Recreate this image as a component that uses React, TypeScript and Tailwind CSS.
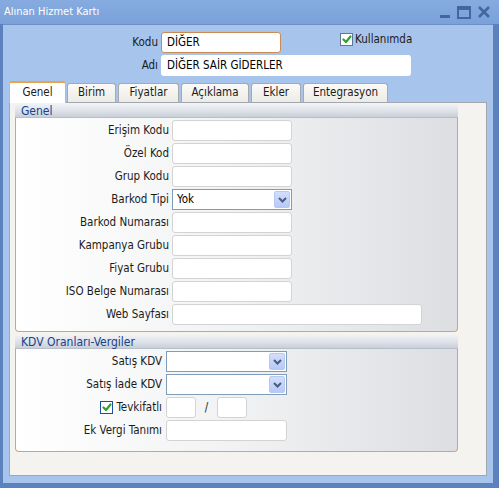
import React from "react"

const font = "font-['DejaVu_Sans_Condensed','DejaVu_Sans',sans-serif] font-stretch-condensed"

const Check = ({ border }: { border: string }) => (
    <div className={`w-[13px] h-[13px] bg-white border ${border} flex items-center justify-center`}>
        <svg width="10" height="9" viewBox="0 0 10 9">
            <path d="M1.5 4.5 L4 7 L8.5 1.5" stroke="#2ea12e" strokeWidth="2.2" fill="none" strokeLinecap="round" strokeLinejoin="round" />
        </svg>
    </div>
)

const TextBox = ({ className = "" }: { className?: string }) => (
    <div className={`h-[21px] bg-white border border-[#d3d3d3] rounded-[3px] ${className}`} />
)

const Select = ({ value, className = "" }: { value?: string; className?: string }) => (
    <div className={`h-[21px] bg-white border border-[#7f9db9] flex items-center justify-between pl-[4px] pr-[1px] ${className}`}>
        <span className="text-[11.5px] text-black">{value}</span>
        <div className="w-[16px] h-[17px] rounded-[2px] bg-gradient-to-b from-[#d3defc] to-[#b6c9f7] border border-[#b9c8ee] flex items-center justify-center">
            <svg width="9" height="6" viewBox="0 0 9 6">
                <path d="M1 1 L4.5 4.5 L8 1" stroke="#4a5c82" strokeWidth="2" fill="none" />
            </svg>
        </div>
    </div>
)

const Row = ({ label, labelW, children }: { label: React.ReactNode; labelW: string; children: React.ReactNode }) => (
    <div className="flex items-center h-[21px]">
        <div className={`${labelW} text-right text-[11.5px] text-[#1b1b1b] flex justify-end items-center`}>{label}</div>
        {children}
    </div>
)

const Group = ({ title, bodyClass, children }: { title: string; bodyClass: string; children: React.ReactNode }) => (
    <div className="w-[443px]">
        <div className="h-[14px] rounded-tl-[3px] bg-gradient-to-b from-[#f0f2f5] via-[#dfe3e9] to-[#c9cfd8] border-b border-[#b7bfca] text-[12px] leading-[14px] text-[#15428b] pl-[6px]">
            {title}
        </div>
        <div className={`border-x border-b border-[#d3a27c] rounded-b-[4px] bg-gradient-to-r from-white via-[#f1f2f3] to-[#dcdee2] ${bodyClass}`}>
            {children}
        </div>
    </div>
)

const Tab = ({ label, w, active }: { label: string; w: string; active?: boolean }) => (
    <div
        className={`${w} text-[11.5px] text-[#1b1b1b] flex items-center justify-center border-x border-t rounded-t-[3px] ${active
            ? "h-[22px] bg-white border-[#b9b9b9] border-t-[#e8a34a] border-t-2 relative z-10 -mb-[1px]"
            : "h-[19px] bg-gradient-to-b from-[#fbfaf7] to-[#ecebe5] border-[#a9a9a9]"}`}
    >
        {label}
    </div>
)

export default function App() {
    const genelRows = ["Erişim Kodu", "Özel Kod", "Grup Kodu", "Barkod Tipi", "Barkod Numarası", "Kampanya Grubu", "Fiyat Grubu", "ISO Belge Numarası", "Web Sayfası"]

    return (
        <div className={`w-[499px] h-[488px] bg-[#5b82bd] flex flex-col ${font}`}>
            {/* title bar */}
            <div className="h-[24px] bg-gradient-to-b from-[#86abe0] to-[#7aa1d9] flex items-center justify-between pl-[4px] pr-[7px]">
                <span className="text-[11px] text-white">Alınan Hizmet Kartı</span>
                <svg width="54" height="14" viewBox="0 0 54 14">
                    <rect x="2" y="10" width="10" height="3" fill="#4466a0" />
                    <rect x="20" y="2" width="12" height="11" fill="none" stroke="#4466a0" strokeWidth="2" />
                    <rect x="20" y="2" width="12" height="3" fill="#4466a0" />
                    <path d="M41 2 L51 12 M51 2 L41 12" stroke="#4466a0" strokeWidth="2.6" />
                </svg>
            </div>

            {/* body */}
            <div className="mx-[3px] w-[490px] h-[459px] bg-[#a7c4ec] border-t border-[#6d8fc4] flex flex-col">
                <div className="flex items-center mt-[7px] h-[21px]">
                    <div className="w-[155px] text-right text-[11.5px] text-[#1b1b1b]">Kodu</div>
                    <div className="ml-[3px] w-[120px] h-[21px] bg-white border border-[#c98b51] rounded-[3px] flex items-center pl-[5px] text-[11.5px] text-black">
                        DİĞER
                    </div>
                    <div className="ml-[59px] flex items-center gap-[2px] -mt-[6px]">
                        <Check border="border-[#5d7896]" />
                        <span className="text-[11.5px] text-[#1b1b1b]">Kullanımda</span>
                    </div>
                </div>
                <div className="flex items-center mt-[2px] h-[21px]">
                    <div className="w-[155px] text-right text-[11.5px] text-[#1b1b1b]">Adı</div>
                    <div className="ml-[3px] w-[250px] h-[21px] bg-white rounded-[3px] flex items-center pl-[6px] text-[11.5px] text-black">
                        DİĞER SAİR GİDERLER
                    </div>
                </div>

                {/* tabs */}
                <div className="flex items-end ml-[6px] mt-[4px] h-[22px]">
                    <Tab label="Genel" w="w-[57px]" active />
                    <div className="ml-[1px]"><Tab label="Birim" w="w-[49px]" /></div>
                    <div className="ml-[2px]"><Tab label="Fiyatlar" w="w-[61px]" /></div>
                    <div className="ml-[2px]"><Tab label="Açıklama" w="w-[68px]" /></div>
                    <div className="ml-[2px]"><Tab label="Ekler" w="w-[50px]" /></div>
                    <div className="ml-[2px]"><Tab label="Entegrasyon" w="w-[85px]" /></div>
                </div>

                {/* tab page */}
                <div className="ml-[6px] w-[478px] h-[374px] bg-[#f4f3ef] border border-[#a3a7ad] pl-[5px] pt-[1px] flex flex-col gap-[3px]">
                    <Group title="Genel" bodyClass="h-[214px] pt-[2px] flex flex-col gap-[2px]">
                        {genelRows.map((r) => (
                            <Row key={r} label={r} labelW="w-[153px]">
                                {r === "Barkod Tipi" ? (
                                    <Select value="Yok" className="ml-[3px] w-[120px]" />
                                ) : (
                                    <TextBox className={`ml-[3px] ${r === "Web Sayfası" ? "w-[250px]" : "w-[120px]"}`} />
                                )}
                            </Row>
                        ))}
                    </Group>
                    <Group title="KDV Oranları-Vergiler" bodyClass="h-[103px] pt-[2px] flex flex-col gap-[2px]">
                        <Row label="Satış KDV" labelW="w-[146px]">
                            <Select className="ml-[4px] w-[121px]" />
                        </Row>
                        <Row label="Satış İade KDV" labelW="w-[146px]">
                            <Select className="ml-[4px] w-[121px]" />
                        </Row>
                        <Row
                            labelW="w-[146px]"
                            label={
                                <span className="flex items-center gap-[3px]">
                                    <Check border="border-[#1f4f9c]" />
                                    Tevkifatlı
                                </span>
                            }
                        >
                            <TextBox className="ml-[4px] w-[30px]" />
                            <span className="w-[21px] text-center text-[11.5px] text-[#1b1b1b]">/</span>
                            <TextBox className="w-[30px]" />
                        </Row>
                        <Row label="Ek Vergi Tanımı" labelW="w-[146px]">
                            <TextBox className="ml-[4px] w-[121px]" />
                        </Row>
                    </Group>
                </div>
            </div>
        </div>
    )
}
